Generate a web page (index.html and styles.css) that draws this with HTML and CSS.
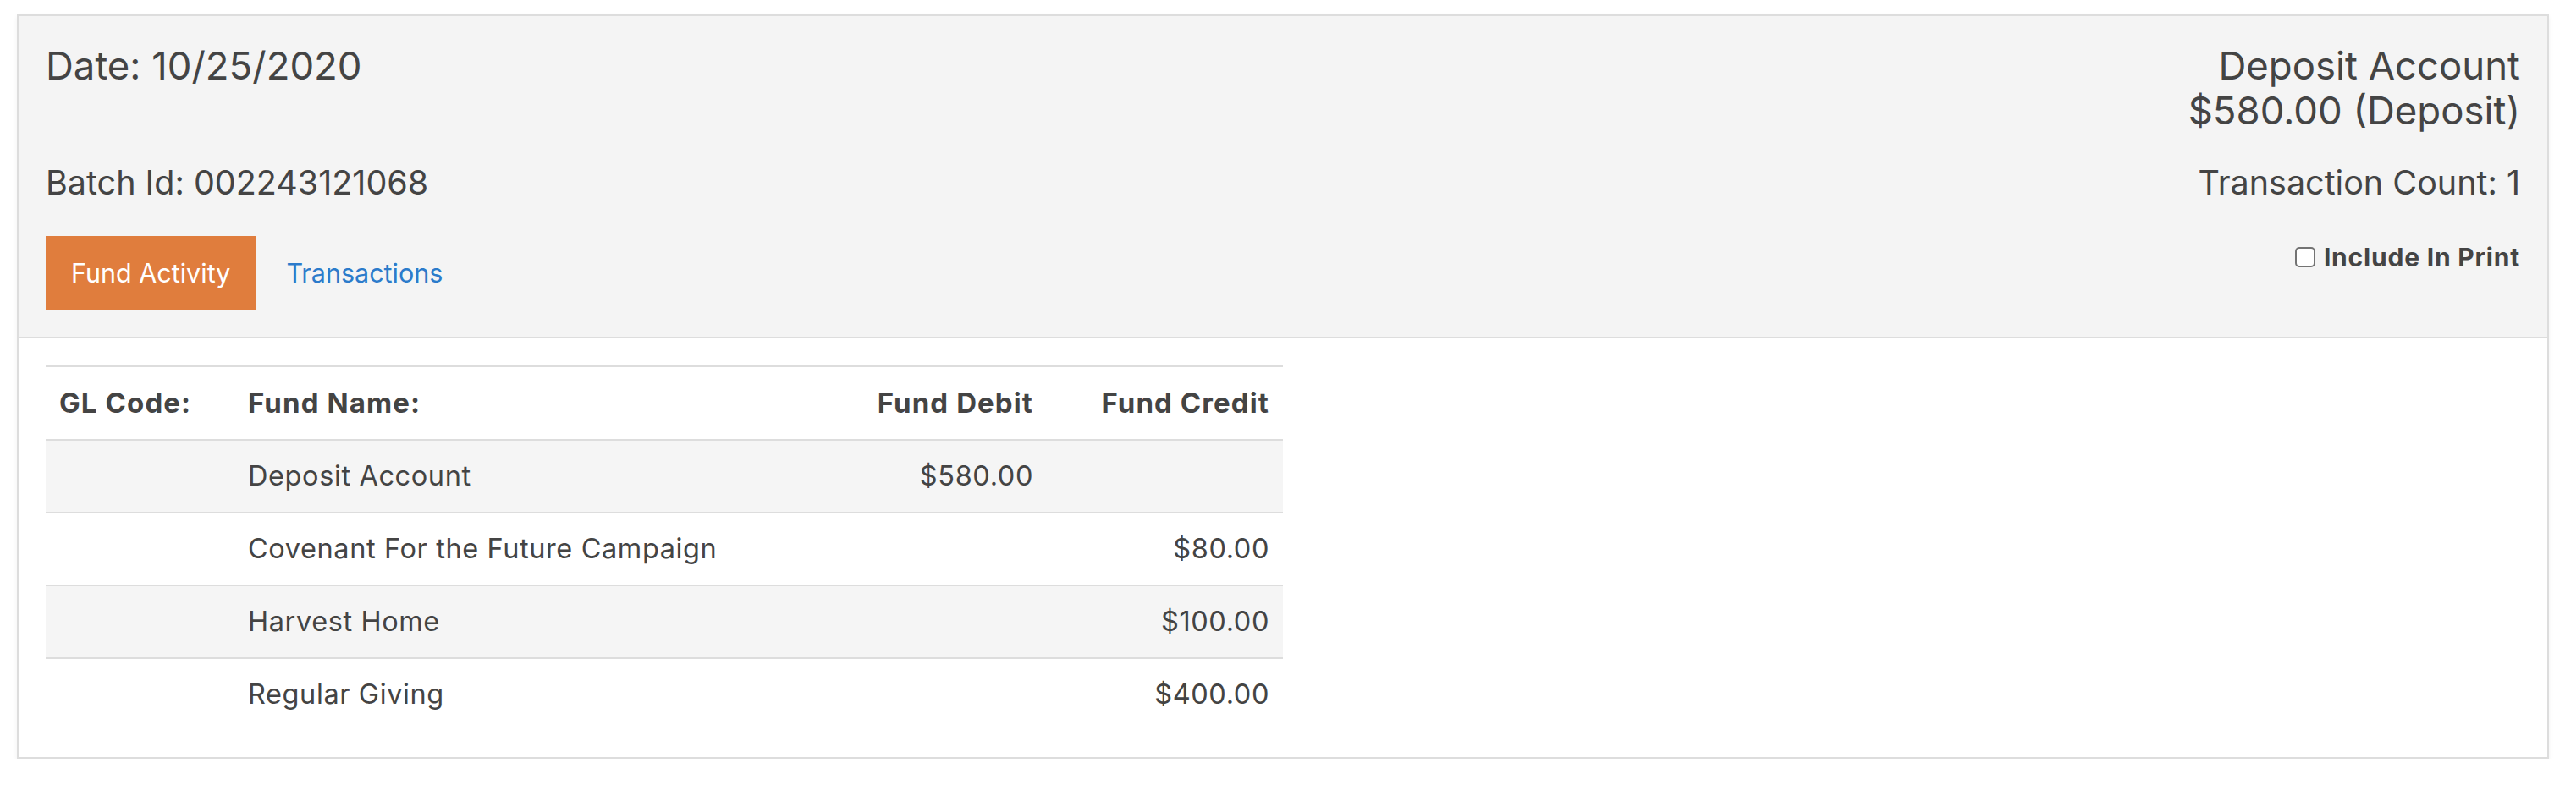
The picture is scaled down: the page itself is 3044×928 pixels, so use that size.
FILE: index.html
```html
<!DOCTYPE html>
<html lang="en">
<head>
<meta charset="utf-8">
<title>Batch</title>
<link rel="stylesheet" href="styles.css">
</head>
<body>
<div class="page">
  <section class="panel">
    <header class="panel-head">
      <div class="head-row row-top">
        <h3 class="title">Date: 10/25/2020</h3>
        <h3 class="title right">Deposit Account<br>$580.00 (Deposit)</h3>
      </div>
      <div class="head-row row-mid">
        <h4 class="sub">Batch Id: 002243121068</h4>
        <h4 class="sub right">Transaction Count: 1</h4>
      </div>
      <div class="head-row row-bottom">
        <nav class="tabs">
          <a class="tab active">Fund Activity</a>
          <a class="tab">Transactions</a>
        </nav>
        <label class="print"><span class="check"></span>Include In Print</label>
      </div>
    </header>
    <div class="panel-body">
      <table class="funds">
        <colgroup>
          <col class="c-gl">
          <col class="c-name">
          <col class="c-debit">
          <col class="c-credit">
        </colgroup>
        <thead>
          <tr><th>GL Code:</th><th>Fund Name:</th><th class="num">Fund Debit</th><th class="num">Fund Credit</th></tr>
        </thead>
        <tbody>
          <tr class="striped"><td></td><td>Deposit Account</td><td class="num">$580.00</td><td class="num"></td></tr>
          <tr><td></td><td>Covenant For the Future Campaign</td><td class="num"></td><td class="num">$80.00</td></tr>
          <tr class="striped"><td></td><td>Harvest Home</td><td class="num"></td><td class="num">$100.00</td></tr>
          <tr><td></td><td>Regular Giving</td><td class="num"></td><td class="num">$400.00</td></tr>
        </tbody>
      </table>
    </div>
  </section>
</div>
</body>
</html>
```

FILE: styles.css
```css
* { box-sizing: border-box; }
html, body { margin: 0; padding: 0; background: #fff; }
body {
  font-family: Inter, Roboto, "Liberation Sans", sans-serif;
  color: #444;
}
.page {
  padding: 17px 32px 0 20px;
}
.panel {
  border: 2px solid #dddddd;
  background: #fff;
  box-shadow: 0 3px 6px rgba(0,0,0,0.06);
}
.panel-head {
  background: #f4f4f4;
  border-bottom: 2px solid #dddddd;
  padding: 32px 32px 32px 32px;
}
.head-row {
  display: flex;
  justify-content: space-between;
  align-items: flex-start;
}
.row-top { margin-bottom: 35px; }
.row-mid { margin-bottom: 39px; }
.title {
  margin: 0;
  font-size: 45.5px;
  font-weight: 400;
  line-height: 53px;
}
.sub {
  margin: 0;
  font-size: 39.5px;
  font-weight: 400;
  line-height: 48px;
}
.right { text-align: right; }
.tabs {
  display: flex;
  align-items: center;
}
.tab {
  display: block;
  height: 87px;
  line-height: 87px;
  padding: 0 30px;
  font-size: 30.5px;
  color: #2b7bcb;
  text-decoration: none;
}
.tab.active {
  background: #e07d3d;
  color: #fff;
}
.tab + .tab { padding-left: 36px; }
.print {
  display: flex;
  align-items: center;
  height: 50px;
  font-size: 30px;
  font-weight: 700;
  letter-spacing: 0.8px;
}
.check {
  width: 24px;
  height: 24px;
  border: 2px solid #737373;
  border-radius: 5px;
  background: #fff;
  margin-right: 10px;
}
.panel-body {
  padding: 32px;
}
.funds {
  width: 50%;
  border-collapse: collapse;
  table-layout: fixed;
  font-size: 32.5px;
  letter-spacing: 0.6px;
}
.c-gl { width: 223px; }
.c-debit { width: 300px; }
.c-credit { width: 279px; }
.funds th, .funds td {
  padding: 18px 16px;
  line-height: 48px;
  text-align: left;
  border-top: 2px solid #dddddd;
  vertical-align: middle;
}
.funds th {
  font-weight: 700;
  font-size: 33px;
  letter-spacing: 1.1px;
  padding-bottom: 19px;
}
.funds .num { text-align: right; }
.funds tr.striped td { background: #f5f5f5; }
```
